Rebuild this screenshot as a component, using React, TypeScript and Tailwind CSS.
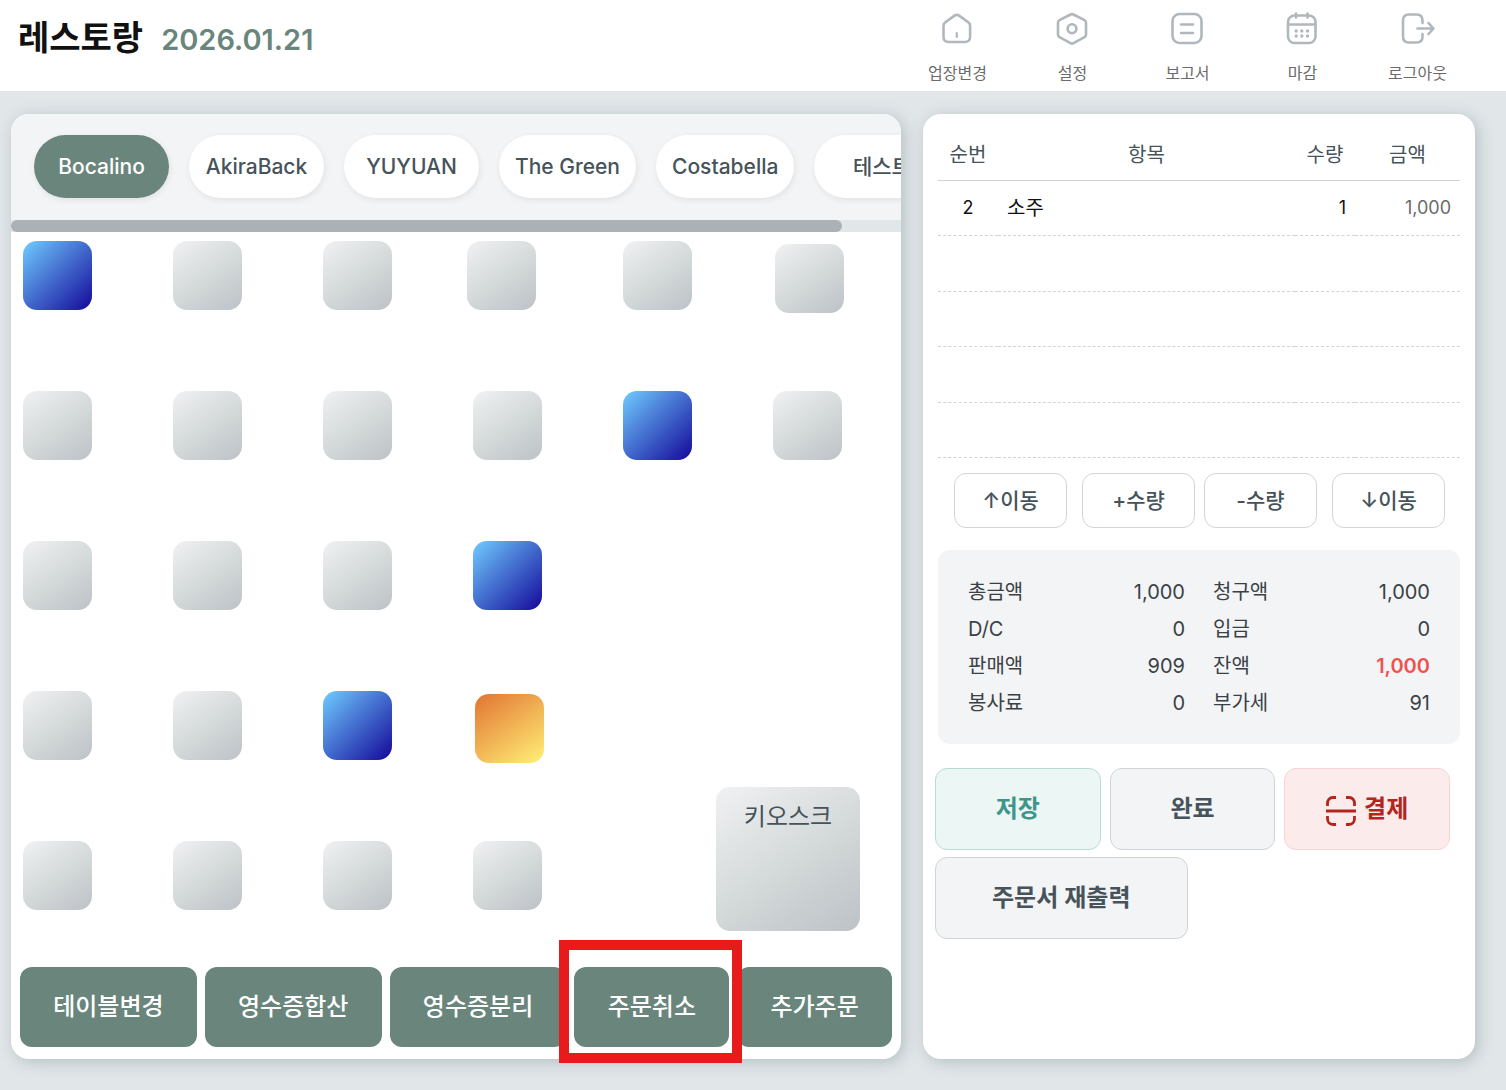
import type { ReactNode } from "react"
import { clsx } from "clsx"

const menus = [
  {
    label: "업장변경",
    icon: (
      <>
        <path d="M3.5 14.6c0-1.3.5-2.3 1.6-3.1l9-6.6c1.800-1.300 3.600-1.300 5.400 0l9 6.600c1.100.8 1.600 1.800 1.600 3.100V26c0 3-2 5-5 5H8.500c-3 0-5-2-5-5z" />
        <path d="M16.800 22v4" strokeWidth="2.200" />
      </>
    ),
  },
  {
    label: "설정",
    icon: (
      <>
        <path d="M15.500 3.500a3 3 0 0 1 3 0l11 5.700a2.800 2.800 0 0 1 1.500 2.500v12a2.800 2.800 0 0 1-1.500 2.500l-11 6a3 3 0 0 1-3 0l-11-6a2.800 2.800 0 0 1-1.500-2.500v-12a2.800 2.800 0 0 1 1.500-2.500z" />
        <circle cx="17" cy="17.700" r="4.400" />
      </>
    ),
  },
  {
    label: "보고서",
    icon: (
      <>
        <rect x="2.500" y="3" width="29" height="29" rx="7" />
        <path d="M11 13.500h12M11 22h12" />
      </>
    ),
  },
  {
    label: "마감",
    icon: (
      <>
        <rect x="3" y="4.500" width="27.500" height="27.500" rx="6.500" />
        <path d="M3 13.500h27.500M11 2.500v4M22.500 2.500v4" />
        <path d="M11.200 20v.01M16.800 20v.01M22.500 20v.01M11.200 25v.01M16.800 25v.01M22.500 25v.01" strokeWidth="3.400" />
      </>
    ),
  },
  {
    label: "로그아웃",
    icon: (
      <>
        <path d="M22.500 12V9.500c0-4-2-6-6-6H9c-4 0-6 2-6 6v16c0 4 2 6 6 6h7.500c4 0 6-2 6-6V23" />
        <path d="M17.500 17.500H33M28.500 12l5 5.500-5 5.500" />
      </>
    ),
  },
]

const shops = ["Bocalino", "AkiraBack", "YUYUAN", "The Green", "Costabella", "테스트"]

const tileColors = {
  empty: "bg-linear-145/srgb from-[#f0f1f3] via-[#d5dada] to-[#bcc2c7]",
  seated: "bg-linear-to-br/srgb from-[#70ccff] to-[#14089a]",
  billed: "bg-linear-145/srgb from-[#e27433] to-[#fff176]",
}

type Tile = { x: number; y: number; state?: keyof typeof tileColors }

const tiles: Tile[] = [
  { x: 12, y: 9, state: "seated" },
  { x: 162, y: 9 },
  { x: 312, y: 9 },
  { x: 456, y: 9 },
  { x: 612, y: 9 },
  { x: 764, y: 12 },
  { x: 12, y: 159 },
  { x: 162, y: 159 },
  { x: 312, y: 159 },
  { x: 462, y: 159 },
  { x: 612, y: 159, state: "seated" },
  { x: 762, y: 159 },
  { x: 12, y: 309 },
  { x: 162, y: 309 },
  { x: 312, y: 309 },
  { x: 462, y: 309, state: "seated" },
  { x: 12, y: 459 },
  { x: 162, y: 459 },
  { x: 312, y: 459, state: "seated" },
  { x: 464, y: 462, state: "billed" },
  { x: 12, y: 609 },
  { x: 162, y: 609 },
  { x: 312, y: 609 },
  { x: 462, y: 609 },
]

const tableActions = ["테이블변경", "영수증합산", "영수증분리", "주문취소", "추가주문"]

const orders = [{ no: 2, name: "소주", qty: 1, price: "1,000" }]
const ORDER_ROWS = 5

const totals = [
  { label: "총금액", value: "1,000" },
  { label: "청구액", value: "1,000" },
  { label: "D/C", value: "0" },
  { label: "입금", value: "0" },
  { label: "판매액", value: "909" },
  { label: "잔액", value: "1,000", due: true },
  { label: "봉사료", value: "0" },
  { label: "부가세", value: "91" },
]

function Panel({ children }: { children: ReactNode }) {
  return (
    <section className="flex min-w-0 flex-col rounded-[18px] bg-white shadow-[3px_3px_16px_rgba(70,90,95,0.28)]">
      {children}
    </section>
  )
}

function Header() {
  return (
    <header className="flex h-[91px] justify-between bg-white pl-[18px] pr-[31px]">
      <div className="flex items-start gap-[18px] pt-[18px]">
        <h1 className="text-[34px] font-semibold leading-10 text-[#111]">레스토랑</h1>
        <span className="pt-[2px] text-[29px] font-semibold leading-10 text-[#6a867c]">2026.01.21</span>
      </div>
      <nav className="flex">
        {menus.map((menu) => (
          <button key={menu.label} type="button" className="flex w-[115px] flex-col items-center pt-[11px]">
            <svg
              viewBox="0 0 36 36"
              className="h-9 w-9 fill-none stroke-[#b0b8bd]"
              strokeWidth="2.6"
              strokeLinecap="round"
              strokeLinejoin="round"
            >
              {menu.icon}
            </svg>
            <span className="mt-[14px] text-base leading-6 text-[#6b6b6b]">{menu.label}</span>
          </button>
        ))}
      </nav>
    </header>
  )
}

function ShopTabs() {
  return (
    <div className="overflow-hidden rounded-t-[18px] bg-[#f3f4f6]">
      <div className="flex gap-5 px-[23px] pb-[22px] pt-[21px]">
        {shops.map((shop, i) => (
          <button
            key={shop}
            type="button"
            className={clsx(
              "h-[63px] min-w-[135px] shrink-0 rounded-full px-4 text-[21px] font-medium shadow-[1px_2px_6px_rgba(0,0,0,0.08)]",
              i === 0 ? "bg-[#6a867c] text-white" : "bg-white text-[#46535a]"
            )}
          >
            {shop}
          </button>
        ))}
      </div>
      <div className="h-3 bg-[#e1e6e8]">
        <div className="h-3 w-14/15 rounded-full bg-[#aab2b8]" />
      </div>
    </div>
  )
}

function FloorPlan() {
  return (
    <div className="relative min-h-[735px] flex-1">
      {tiles.map((tile) => (
        <button
          key={`${tile.x}-${tile.y}`}
          type="button"
          className={clsx("absolute h-[69px] w-[69px] rounded-[14px]", tileColors[tile.state ?? "empty"])}
          style={{ left: tile.x, top: tile.y }}
        />
      ))}
      <button
        type="button"
        className={clsx(
          "absolute left-[705px] top-[555px] flex h-36 w-36 justify-center rounded-[14px] pt-[14px] text-2xl text-[#46535a]",
          tileColors.empty
        )}
      >
        키오스크
      </button>
    </div>
  )
}

function TableActions() {
  return (
    <div className="flex gap-2 px-[9px] pb-3">
      {tableActions.map((label) => (
        <div key={label} className="relative flex-auto">
          <button type="button" className="h-20 w-full rounded-xl bg-[#6a867c] px-8 text-2xl font-medium text-white">
            {label}
          </button>
          {label === "주문취소" && (
            <div className="pointer-events-none absolute -bottom-4 -left-[15px] -right-[13px] -top-[27px] z-10 border-[10px] border-[#e71b1b]" />
          )}
        </div>
      ))}
    </div>
  )
}

function OrderTable() {
  const rows = Array.from({ length: ORDER_ROWS }, (_, i) => orders[i])

  return (
    <table className="w-full table-fixed border-separate border-spacing-0 text-[20px]">
      <thead>
        <tr className="h-[55px] text-[#46535a] *:border-b *:border-[#cdd3d8] *:pt-1 *:font-normal">
          <th className="w-[60px]">순번</th>
          <th>항목</th>
          <th className="w-[60px]">수량</th>
          <th className="w-[105px]">금액</th>
        </tr>
      </thead>
      <tbody>
        {rows.map((order, i) => (
          <tr key={i} className="h-[55px] text-[#111] *:border-b *:border-dashed *:border-[#d0d4d8] even:h-14">
            <td className="text-center text-lg">{order?.no}</td>
            <td className="pl-[9px]">{order?.name}</td>
            <td className="pr-[9px] text-right text-lg">{order?.qty}</td>
            <td className="pr-[9px] text-right text-lg text-[#6b6b6b]">{order?.price}</td>
          </tr>
        ))}
      </tbody>
    </table>
  )
}

function QtyButton({ children }: { children: ReactNode }) {
  return (
    <button
      type="button"
      className="h-[55px] flex-1 rounded-xl border border-[#cfd5d9] text-[21px] font-medium text-[#46535a]"
    >
      {children}
    </button>
  )
}

function Totals() {
  return (
    <dl className="mt-[22px] grid grid-cols-2 gap-x-7 rounded-xl bg-[#f3f4f6] px-[30px] pb-[22px] pt-6 text-[20px] leading-[37px] text-[#3a4146]">
      {totals.map((row) => (
        <div key={row.label} className="flex justify-between">
          <dt>{row.label}</dt>
          <dd className={clsx(row.due && "font-semibold text-[#ef5350]")}>{row.value}</dd>
        </div>
      ))}
    </dl>
  )
}

function ScanIcon() {
  return (
    <svg viewBox="0 0 30 30" className="mt-1 h-[30px] w-[30px] fill-none stroke-current" strokeWidth="2.8">
      <path d="M1.500 10V7.500c0-3.500 2-6 5.500-6h3M20 1.500h3c3.500 0 5.500 2.500 5.500 6V10M28.500 20v2.500c0 3.500-2 6-5.500 6h-3M10 28.500H7c-3.500 0-5.500-2.500-5.500-6V20M0 15h30" />
    </svg>
  )
}

function OrderActions() {
  const base = "flex h-[82px] items-center justify-center gap-2 rounded-xl border text-2xl font-semibold"
  const plain = "border-[#cfd4d9] bg-[#f3f4f6] text-[#46535a]"

  return (
    <div className="mt-6 flex flex-col gap-[7px] pl-3 pr-[25px]">
      <div className="grid grid-cols-3 gap-[9px]">
        <button type="button" className={clsx(base, "border-[#b9dbd2] bg-[#ecf6f5] text-[#3f958a]")}>
          저장
        </button>
        <button type="button" className={clsx(base, plain)}>
          완료
        </button>
        <button type="button" className={clsx(base, "border-[#fad4d4] bg-[#fbeceb] text-[#b3261e]")}>
          <ScanIcon />
          결제
        </button>
      </div>
      <button type="button" className={clsx(base, plain, "self-start px-14")}>
        주문서 재출력
      </button>
    </div>
  )
}

export default function App() {
  return (
    <div className="flex min-h-screen flex-col bg-[#e1e6e9] font-['Inter','Noto_Sans_CJK_KR',sans-serif]">
      <Header />
      <main className="grid flex-1 grid-cols-[890fr_552fr] gap-[22px] pb-[31px] pl-[11px] pr-[31px] pt-[23px]">
        <Panel>
          <ShopTabs />
          <FloorPlan />
          <TableActions />
        </Panel>
        <Panel>
          <div className="px-[15px] pt-3">
            <OrderTable />
            <div className="mt-[15px] flex gap-[9px] pl-4 pr-[15px]">
              <div className="flex flex-1 gap-[15px]">
                <QtyButton>↑이동</QtyButton>
                <QtyButton>+수량</QtyButton>
              </div>
              <div className="flex flex-1 gap-[15px]">
                <QtyButton>-수량</QtyButton>
                <QtyButton>↓이동</QtyButton>
              </div>
            </div>
            <Totals />
          </div>
          <OrderActions />
        </Panel>
      </main>
    </div>
  )
}
